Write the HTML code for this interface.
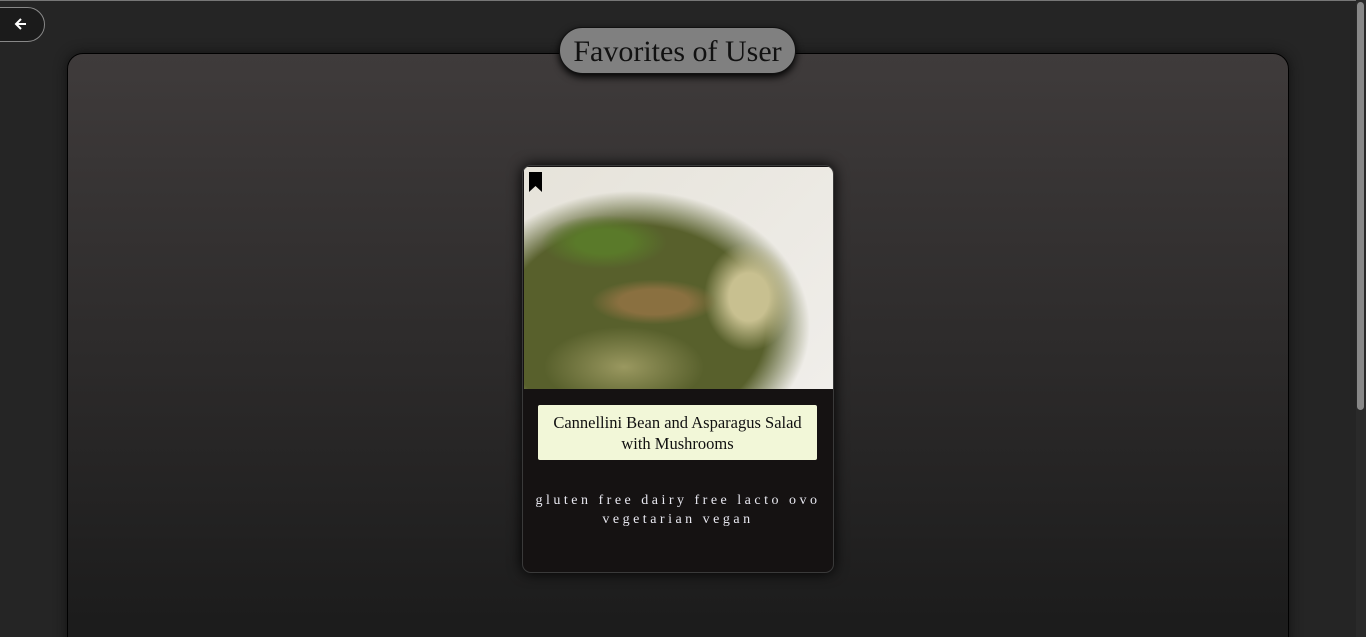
<!DOCTYPE html>
<html><head><style>
html,body{margin:0;width:1366px;height:637px;overflow:hidden}
body{background:#252525;font-family:"Liberation Serif",serif;position:relative}
.top{position:absolute;left:0;top:0;width:1366px;height:1px;background:#777}
.back{position:absolute;left:-20px;top:7px;width:63px;height:33px;border:1px solid #888;border-radius:18px;background:#1b1b1b}
.back svg{position:absolute;left:33px;top:9px}
.panel{position:absolute;left:67px;top:53px;width:1220px;height:600px;border:1px solid #000;border-radius:16px;background:linear-gradient(#3f3b3b,#1c1c1c 95%);box-shadow:0 0 12px #111}
.title{position:absolute;left:559px;top:27px;width:235px;height:45px;border:1px solid #111;border-radius:24px;background:#808080;box-shadow:0 3px 8px #000;font-size:30px;line-height:48px;text-align:center;color:#111}
.sb{position:absolute;right:0;top:0;width:10px;height:637px;background:#2a2a2a}
.sb div{position:absolute;left:1px;top:2px;width:7px;height:408px;background:#888;border-radius:4px}
.card{position:absolute;left:522px;top:165px;width:310px;height:406px;border:1px solid #3a3a3a;border-radius:9px;background:#151212;overflow:hidden;box-shadow:0 0 14px #000}
.img{position:absolute;left:1px;top:1px;width:310px;height:222px;overflow:hidden;background:
radial-gradient(ellipse 70px 25px at 130px 135px,#8a7040 50%,transparent 90%),
radial-gradient(ellipse 50px 60px at 225px 130px,#c8c090 40%,transparent 90%),
radial-gradient(ellipse 80px 40px at 100px 200px,#9a9860,transparent),
radial-gradient(ellipse 70px 30px at 80px 75px,#5a7a2a 40%,transparent 90%),
radial-gradient(ellipse 220px 170px at 110px 160px,#58602c 60%,transparent 80%),
linear-gradient(135deg,#e6e3da,#f0eeea)}
.bm{position:absolute;left:6px;top:6px}
.name{position:absolute;left:15px;top:239px;width:279px;height:55px;background:#f2f7d8;border-radius:2px;font-size:16.5px;line-height:21px;text-align:center;color:#111;padding:7px 6px 0;box-sizing:border-box}
.tags{position:absolute;left:0;top:325px;width:310px;text-align:center;color:#e8e8f0;font-size:14px;letter-spacing:3.5px;line-height:19px}
</style></head><body>
<div class="top"></div>
<div class="back"><svg width="14" height="14" viewBox="0 0 14 14"><path d="M12 7H2M7 2L2 7l5 5" stroke="#fff" stroke-width="2" fill="none"/></svg></div>
<div class="panel"></div>
<div class="title">Favorites of User</div>
<div class="card"><div class="img"></div>
<svg class="bm" width="13" height="20" viewBox="0 0 13 20"><path d="M0 0h13v20l-6.5-6L0 20z" fill="#000"/></svg>
<div class="name">Cannellini Bean and Asparagus Salad with Mushrooms</div>
<div class="tags">gluten free dairy free lacto ovo vegetarian vegan</div></div>
<div class="sb"><div></div></div>
</body></html>
